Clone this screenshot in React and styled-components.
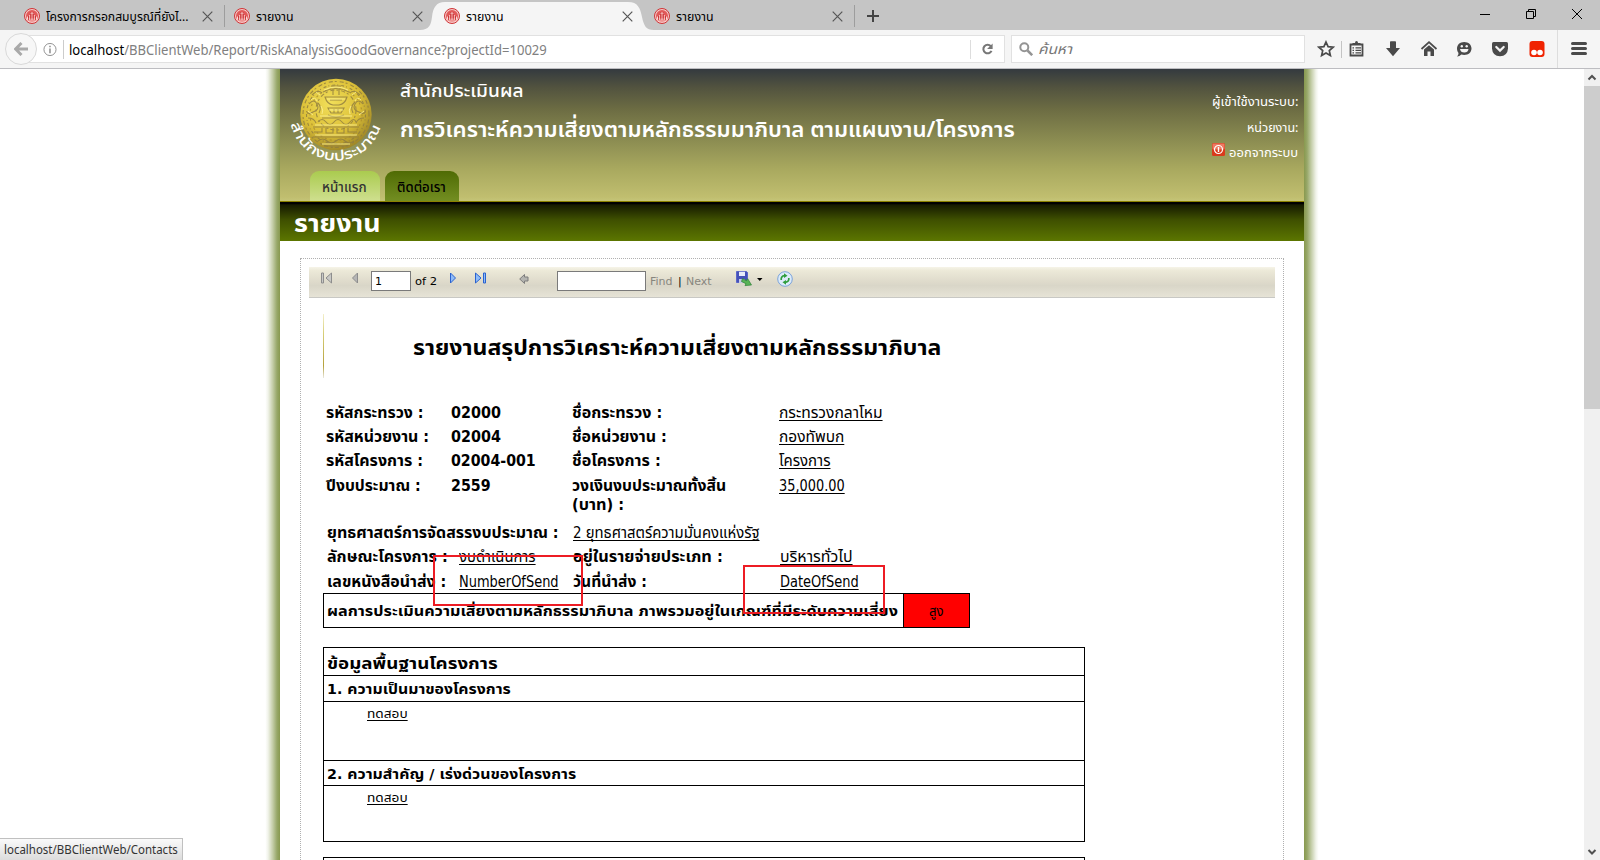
import React, { useLayoutEffect, useRef, useState } from 'react';
import styled, { createGlobalStyle, css } from 'styled-components';

const GlobalStyle = createGlobalStyle`
  * { box-sizing: border-box; }
  body { margin: 0; background: #fff; overflow: hidden; }
`;

const TAHOMA = '"DejaVu Sans Condensed", "DejaVu Sans", "Noto Sans Thai", "Loma", sans-serif';
const VERDANA = '"DejaVu Sans", sans-serif';
const UI = '"Noto Sans", "Open Sans", "Noto Sans Thai", sans-serif';

/* Text set to a fixed measure, whatever the widths of the installed Thai font. */
const Measure = styled.span`
  display: inline-block;
  flex: none;
  width: ${(p) => p.$w}px;
  white-space: nowrap;
  vertical-align: top;
`;
const Stretch = styled.span`
  display: inline-block;
  transform-origin: 0 50%;
  ${(p) => p.$line && css`
    text-decoration: underline;
    text-decoration-thickness: 1px;
    text-decoration-skip-ink: none;
    text-underline-offset: 2px;
  `}
`;
function Fit({ w, line, children, className }) {
  const ref = useRef(null);
  const [k, setK] = useState(1);
  useLayoutEffect(() => {
    const natural = ref.current.offsetWidth;
    if (natural) setK(w / natural);
  }, [w, children]);
  return (
    <Measure $w={w} className={className}>
      <Stretch ref={ref} $line={line} style={{ transform: `scaleX(${k})` }}>{children}</Stretch>
    </Measure>
  );
}

const Screen = styled.div`
  display: flex;
  flex-direction: column;
  position: relative;
  width: 1600px;
  height: 860px;
  overflow: hidden;
  background: #fff;
  color: #000;
`;

/* ---------- browser chrome ---------- */
const TabStrip = styled.div`
  display: flex;
  flex: none;
  height: 30px;
  padding-left: 14px;
  background: #c5c5c5;
  font: 13px/30px ${UI};
`;
const Tab = styled.div`
  display: flex;
  position: relative;
  align-items: center;
  width: 210px;
  height: 32px;
  padding: 0 10px;
  gap: 6px;
`;
const TabShape = styled.svg`
  position: absolute;
  left: -14px;
  top: 2px;
  width: 242px;
  height: 28px;
`;
const TabLabel = styled(Fit)`position: relative; margin-top: -1px;`;
const TabIcon = styled.svg`position: relative; flex: none; width: 16px; height: 16px;`;
const CloseIcon = styled.svg`position: relative; width: 11px; height: 11px; margin-left: auto; margin-right: 1px;`;
const Divider = styled.i`
  flex: none;
  width: 1px;
  height: ${(p) => p.$h}px;
  background: ${(p) => p.$c || '#9d9d9d'};
`;
const TabDivider = styled(Divider)`position: absolute; right: -1px; top: 5px;`;
const NewTab = styled.svg`width: 12px; height: 12px; margin: 10px 0 0 13px;`;
const WindowButtons = styled.div`
  display: flex;
  gap: 34px;
  margin: 8px 17px 0 auto;
  svg { width: 12px; height: 12px; }
`;

const NavBar = styled.div`
  display: flex;
  flex: none;
  align-items: center;
  height: 39px;
  padding-left: 5px;
  background: #f5f5f5;
  border-bottom: 1px solid #bdbdc1;
  font: 15px/26px ${UI};
`;
const BackButton = styled.div`
  display: flex;
  z-index: 1;
  flex: none;
  align-items: center;
  justify-content: center;
  width: 32px;
  height: 32px;
  border: 1px solid #d9d9d9;
  border-radius: 50%;
  background: #f7f7f7;
`;
const Field = styled.div`
  display: flex;
  align-items: center;
  height: 28px;
  border: 1px solid #e1e1e1;
  background: #fff;
`;
const UrlField = styled(Field)`
  width: 978px;
  margin-left: -10px;
  padding-left: 15px;
`;
const InfoIcon = styled.svg`width: 15px; height: 15px; margin: 0 6px 0 0;`;
const UrlText = styled.span`
  display: flex;
  margin-left: 5px;
  color: #808080;
  b { color: #000; font-weight: 400; }
`;
const ReloadIcon = styled.svg`width: 14px; height: 14px; margin: 0 10px;`;
const SearchField = styled(Field)`
  width: 294px;
  margin-left: 6px;
  padding-left: 7px;
  gap: 5px;
  color: #757575;
  font-style: italic;
  font-size: 14px;
`;
const ActionIcons = styled.div`
  display: flex;
  align-items: center;
  height: 38px;
  margin-left: 12px;
  svg { width: 18px; height: 18px; flex: none; }
`;
const Gap = styled.i`flex: none; width: ${(p) => p.$w}px;`;

/* ---------- page ---------- */
const Viewport = styled.div`
  display: flex;
  flex: 1;
  min-height: 0;
`;
const Shade = styled.div`
  flex: none;
  width: 15px;
  margin-left: ${(p) => (p.$side === 'left' ? 265 : 0)}px;
  background: linear-gradient(to ${(p) => p.$side}, #88994f 0%, #97a768 20%, #c6cfab 50%, #f1f3ea 80%, #fff 98%);
`;
const Page = styled.div`
  display: flex;
  flex: none;
  flex-direction: column;
  width: 1024px;
  height: 791px;
  overflow: hidden;
`;
const Header = styled.header`
  display: flex;
  flex: none;
  position: relative;
  height: 133px;
  border-bottom: 1px solid #8b8200;
  background: linear-gradient(#343a3f 0%, #52533f 14%, #6d6d43 31%, #8a8b51 53%, #a9a95f 76%, #c0be6f 97%, #c5c478 100%);
  color: #fff;
`;
const Brand = styled.div`display: flex; flex-direction: column; width: 115px;`;
const Seal = styled.svg`width: 100px; height: 98px; margin-left: 6px; overflow: visible;`;
const HeaderTabs = styled.nav`
  display: flex;
  gap: 5px;
  margin: 4px 0 0 30px;
`;
const HeaderTab = styled.span`
  flex: none;
  height: 30px;
  padding: 0 13px 0 12px;
  border-radius: 9px 9px 0 0;
  color: ${(p) => (p.$active ? '#333' : '#000')};
  background: ${(p) => (p.$active ? 'linear-gradient(#aacb4f, #cfdf8f)' : 'linear-gradient(#4f6b04, #738e22)')};
  font: 500 14px/31px ${UI};
`;
const Titles = styled.div`
  display: flex;
  flex-direction: column;
  padding: 7px 0 0 5px;
  font-family: ${UI};
`;
const Org = styled.div`height: 31px; font-size: 18px; font-weight: 500; line-height: 28px;`;
const System = styled.div`height: 40px; font-size: 22px; font-weight: 600; line-height: 42px;`;
const UserInfo = styled.div`
  display: flex;
  flex-direction: column;
  align-items: flex-end;
  margin-left: auto;
  padding: 20px 6px 0 0;
  font: 13px/25.5px ${UI};
`;
const Logout = styled.div`
  display: flex;
  gap: 4px;
  svg { width: 13px; height: 13px; margin-top: 3px; }
`;
const Banner = styled.div`
  flex: none;
  height: 39px;
  padding-left: 14px;
  background: linear-gradient(#000 0, #000 5%, #151a00 7%, #3e4f00 45%, #5c7600 100%);
  color: #fff;
  font: 700 24px/44px ${TAHOMA};
`;
const Panel = styled.div`
  display: flex;
  flex: none;
  flex-direction: column;
  width: 984px;
  height: 700px;
  margin: 17px 0 0 20px;
  padding: 8px 8px 0;
  border: 1px dotted #b0b0b0;
`;
const ReportBar = styled.div`
  display: flex;
  flex: none;
  align-items: flex-start;
  height: 31px;
  padding: 4px 0 0 12px;
  border-bottom: 1px solid #c8c8c4;
  background: linear-gradient(#f6f4e8 0, #ece9d8 12%, #dedacb 50%, #d9d6c8 62%, #e6e3d6 100%);
  font: 11px/21px ${VERDANA};
  svg { flex: none; }
`;
const BarInput = styled.div`
  flex: none;
  width: ${(p) => p.$w}px;
  height: 20px;
  padding-left: 3px;
  border: 1px solid #7a7a7a;
  background: #fff;
  line-height: 19px;
`;
const Muted = styled.span`color: #87867e;`;

/* ---------- report ---------- */
const Report = styled.div`
  display: flex;
  flex-direction: column;
  padding-left: 14px;
  font: 15px/26px ${TAHOMA};
`;
const ReportHead = styled.div`
  display: flex;
  height: 64px;
  margin-top: 16px;
  padding-left: 89px;
  border-left: 1px solid;
  border-image: linear-gradient(#f5f1d0, #d8cf7a 30%, #b5a13c 80%, #eee) 1;
  font-size: 21px;
  font-weight: 700;
  line-height: 68px;
`;
const Fields = styled.div`
  display: flex;
  flex-direction: column;
  margin-top: 22px;
`;
const FieldRow = styled.div`
  display: grid;
  grid-template-columns: ${(p) => p.$cols};
  height: ${(p) => p.$h}px;
  padding-left: ${(p) => p.$pad || 3}px;
`;
const Strong = styled(Fit)`font-weight: 700;`;
const SecondLine = styled.div`margin-top: -7px; line-height: 26px;`;
const Result = styled.div`
  display: flex;
  width: 647px;
  height: 35px;
  border: 1px solid #000;
  line-height: 35px;
  font-size: 14px;
`;
const ResultText = styled.div`width: 580px; padding-left: 3px; border-right: 1px solid #000;`;
const Level = styled.div`flex: 1; padding-left: 25px; background: #f00;`;
const Table = styled.div`
  width: 762px;
  margin-top: ${(p) => p.$top}px;
  border: 1px solid #000;
  border-bottom: 0;
`;
const Cell = styled.div`
  height: ${(p) => p.$h}px;
  padding-left: ${(p) => (p.$body ? 43 : 3)}px;
  border-bottom: 1px solid #000;
  font-size: ${(p) => (p.$body ? 12 : p.$head ? 16 : 14)}px;
  line-height: ${(p) => (p.$body ? 25 : p.$head ? 32 : 26)}px;
`;

const Highlight = styled.div`
  position: absolute;
  left: ${(p) => p.$x}px;
  top: ${(p) => p.$y}px;
  width: ${(p) => p.$w}px;
  height: ${(p) => p.$h}px;
  border: 2px solid #ed1c24;
`;
const StatusTip = styled.div`
  position: absolute;
  left: -1px;
  bottom: 0;
  width: 184px;
  height: 22px;
  padding-left: 4px;
  border: 1px solid #c0c0c0;
  border-bottom: 0;
  background: linear-gradient(#fafafa, #dcdcdc);
  color: #333;
  font: 12px/21px ${UI};
`;
const Scrollbar = styled.div`
  display: flex;
  flex-direction: column;
  justify-content: space-between;
  width: 16px;
  margin-left: auto;
  background: #f0f0f0;
  svg { width: 16px; height: 17px; }
`;
const Thumb = styled.div`height: 323px; margin-bottom: auto; background: #cdcdcd;`;

const Cross = () => (
  <CloseIcon viewBox="0 0 11 11"><path d="M.7.7l9.6 9.6M10.3.7L.7 10.3" stroke="#555" strokeWidth="1.2" /></CloseIcon>
);
const Favicon = () => (
  <TabIcon viewBox="0 0 16 16">
    <circle cx="8" cy="8" r="7.5" fill="#f7c9c7" stroke="#cf3336" />
    <circle cx="8" cy="8" r="6" fill="#e05a5a" />
    <path d="M3 11h10M3.5 8.5v3M5.7 7v5M8 4v8M10.300 7v5M12.500 8.500v3M6 5.500h4M4 13h8" stroke="#ffe3e0" strokeWidth=".9" fill="none" />
    <path d="M6.800 4.500v7M9.200 4.500v7M4.600 8v4M11.400 8v4" stroke="#c4262b" strokeWidth=".8" />
  </TabIcon>
);
function BrowserTab({ label, w, active, divider }) {
  return (
    <Tab>
      {active && (
        <TabShape viewBox="0 0 242 28">
          <path d="M0 28C9 28 11 23 12 15C13 6 16 0 25 0H208C218 0 220 6 222 15C224 24 226 28 234 28Z" fill="#f5f5f5" />
        </TabShape>
      )}
      <Favicon />
      <TabLabel w={w}>{label}</TabLabel>
      <Cross />
      {divider && <TabDivider $h={22} />}
    </Tab>
  );
}

function SealArt() {
  return (
    <Seal viewBox="286 69 100 98">
      <defs>
        <radialGradient id="gold" cx="42%" cy="35%" r="68%">
          <stop offset="0" stopColor="#f2df5a" />
          <stop offset=".6" stopColor="#dcc038" />
          <stop offset="1" stopColor="#9c8426" />
        </radialGradient>
        <path id="rim" d="M291 124 A46 46 0 0 0 381 124" />
      </defs>
      <circle cx="336" cy="114.500" r="35.700" fill="url(#gold)" />
      <g fill="none" stroke="#8f7c40" strokeWidth="1.100" opacity=".8">
        <circle cx="336" cy="114.500" r="33" strokeDasharray="2 3 4 2" />
        <circle cx="336" cy="114.500" r="29.500" strokeDasharray="3 2 1 3" />
        <circle cx="336" cy="114.500" r="26" strokeDasharray="2 3" stroke="#a98b2c" />
        <circle cx="336" cy="110" r="20" strokeDasharray="4 2 2 3" />
        <path d="M323 92q13-7 26 0M325 97h22q-2 7-8 8h-6q-6-1-8-8zM328 108h16l-3 5h-10zM322 118h28M318 122q4-5 8 0t8 0 8 0 8 0 6 0M313 127h46M314 132h8v-4M326 128v5h7v-5M337 128v5h7v-5M348 128v4h9M313 137h46M318 141q5-4 9 0t9 0 9 0 9 0M324 146h24" />
        <path d="M309 104q5-6 8 0t-4 8q-5 3-6 0M363 104q-5-6-8 0t4 8q5 3 6 0M312 95q6-6 10-2M360 95q-6-6-10-2M308 118q6 0 8 5M364 118q-6 0-8 5M318 103q4 4 1 10M354 103q-4 4-1 10" />
        <path d="M331 86h10M333 89v6M339 89v6M330 100h12M334 109v4M338 109v4M328 115q8 4 16 0" />
      </g>
      <g fill="none" stroke="#fbee8e" strokeWidth=".9">
        <path d="M324 90q12-6 24 0M327 99h18M329 110h14M320 116h32M315 125h42M315 135h42M322 144h28M311 100q4-4 6 1M361 100q-4-4-6 1M308 111l5 4M364 111l-5 4M316 92l4 3M356 92l-4 3M321 106q3 4 1 8M351 106q-3 4-1 8" />
      </g>
      <text fill="#fff" fontFamily='"Noto Sans Thai", "Loma", sans-serif' fontSize="14" fontWeight="500">
        <textPath href="#rim" textLength="122" lengthAdjust="spacingAndGlyphs">สำนักงบประมาณ</textPath>
      </text>
    </Seal>
  );
}

const ink = '#4a4a4a';

export default function App() {
  return (
    <Screen>
      <GlobalStyle />
      <TabStrip>
        <BrowserTab label="โครงการกรอกสมบูรณ์ที่ยังไ..." w={142} divider />
        <BrowserTab label="รายงาน" w={38} />
        <BrowserTab label="รายงาน" w={38} active />
        <BrowserTab label="รายงาน" w={38} divider />
        <NewTab viewBox="0 0 12 12"><path d="M6 0v12M0 6h12" stroke="#444" strokeWidth="2" /></NewTab>
        <WindowButtons>
          <svg viewBox="0 0 12 12"><path d="M1 6.500h10" stroke="#000" /></svg>
          <svg viewBox="0 0 12 12"><path d="M1.500 3.500h7v7h-7zM3.500 3V1.500h7v7H9" fill="none" stroke="#000" /></svg>
          <svg viewBox="0 0 12 12"><path d="M1 1l10 10M11 1L1 11" stroke="#000" /></svg>
        </WindowButtons>
      </TabStrip>

      <NavBar>
        <BackButton>
          <svg width="14" height="14" viewBox="0 0 14 14"><path d="M7.500 1L1.500 7l6 6M2 7h12" fill="none" stroke="#a9a9a9" strokeWidth="3" /></svg>
        </BackButton>
        <UrlField>
          <InfoIcon viewBox="0 0 15 15"><circle cx="7.500" cy="7.500" r="6.500" fill="none" stroke="#8c8c8c" /><path d="M7.500 3.500v1.500M7.500 6.500v5" stroke="#8c8c8c" strokeWidth="1.600" /></InfoIcon>
          <Divider $h={19} $c="#ccc" />
          <UrlText><Fit w={478}><b>localhost</b>/BBClientWeb/Report/RiskAnalysisGoodGovernance?projectId=10029</Fit></UrlText>
          <Gap $w={423} />
          <Divider $h={19} $c="#ddd" />
          <ReloadIcon viewBox="0 0 14 14"><path d="M10.600 4A4.600 4.600 0 1 0 11.300 9" fill="none" stroke="#777" strokeWidth="2.200" /><path d="M12.500 1v6h-6z" fill="#777" /></ReloadIcon>
        </UrlField>
        <SearchField>
          <svg width="14" height="14" viewBox="0 0 14 14"><circle cx="5.300" cy="5.300" r="4" fill="none" stroke="#949494" strokeWidth="2" /><path d="M8.500 8.500l4.700 4.700" stroke="#949494" strokeWidth="2.500" /></svg>
          <Fit w={34}>ค้นหา</Fit>
        </SearchField>
        <ActionIcons>
          <svg viewBox="0 0 18 18"><path d="M9 2l2.100 4.700 5 .5-3.800 3.400 1.100 5L9 13l-4.400 2.600 1.100-5L1.900 7.200l5-.5z" fill="none" stroke={ink} strokeWidth="1.700" /></svg>
          <Gap $w={6} /><Divider $h={17} $c="#c4c4c4" /><Gap $w={6} />
          <svg viewBox="0 0 18 18"><path d="M2.500 4.500h12v11h-12z" fill="none" stroke={ink} strokeWidth="1.800" /><path d="M4.500 5V3H7q0-2 1.500-2T10 3h2.500v2z" fill={ink} /><path d="M4.500 7.800H6M7.500 7.800h5.500M4.500 10.300H6M7.500 10.300h5.500M4.500 12.800H6M7.500 12.800h5.500" stroke={ink} strokeWidth="1.200" /></svg>
          <Gap $w={18} />
          <svg viewBox="0 0 18 18"><path d="M6 2q0-.8.8-.8h4.400q.8 0 .8.800v6h4L9 16.200 2 8h4z" fill={ink} /></svg>
          <Gap $w={18} />
          <svg viewBox="0 0 18 18"><path d="M1.500 9L9 2.200 16.500 9" fill="none" stroke={ink} strokeWidth="1.800" /><path d="M4 9.500l5-4.300 5 4.300V16h-3.500v-4.500h-3V16H4z" fill={ink} /></svg>
          <Gap $w={17} />
          <svg viewBox="0 0 18 18"><path d="M9.200 2C13.500 2 16.500 4.800 16.500 8.500S13.500 15 9.200 15c-1 0-2-.2-2.800-.5Q4.500 16.500 2 16.500q1.600-1.500 1.500-3.500C2.500 11.800 2 10.300 2 8.500 2 4.800 5 2 9.200 2z" fill={ink} /><path d="M5 9h8.500q-.5 3.500-4.200 3.500T5 9z" fill="#f5f5f5" /><circle cx="6.800" cy="6.200" r="1.200" fill="#f5f5f5" /><circle cx="11.700" cy="6.200" r="1.200" fill="#f5f5f5" /></svg>
          <Gap $w={18} />
          <svg viewBox="0 0 18 18"><path d="M1 3.500Q1 2 2.500 2h13Q17 2 17 3.500v5Q16.500 16 9 16.300 1.500 16 1 8.500z" fill={ink} /><path d="M5.300 7L9 10.600 12.700 7" fill="none" stroke="#f5f5f5" strokeWidth="2.200" strokeLinecap="round" /></svg>
          <Gap $w={19} />
          <svg viewBox="0 0 18 18"><rect x="1.500" y="1" width="15" height="16" rx="3" fill="#f02300" /><circle cx="6" cy="12.500" r="2.800" fill="#fff" /><circle cx="12" cy="12.500" r="2.800" fill="#fff" /></svg>
          <Gap $w={11} /><Divider $h={38} $c="#ddd" /><Gap $w={12} />
          <svg viewBox="0 0 18 18"><path d="M2.500 3.500h13M2.500 8.500h13M2.500 13.500h13" stroke={ink} strokeWidth="3" strokeLinecap="round" /></svg>
        </ActionIcons>
      </NavBar>

      <Viewport>
        <Shade $side="left" />
        <Page>
          <Header>
            <Brand>
              <SealArt />
              <HeaderTabs>
                <HeaderTab $active><Fit w={45}>หน้าแรก</Fit></HeaderTab>
                <HeaderTab><Fit w={49}>ติดต่อเรา</Fit></HeaderTab>
              </HeaderTabs>
            </Brand>
            <Titles>
              <Org><Fit w={124}>สำนักประเมินผล</Fit></Org>
              <System><Fit w={615}>การวิเคราะห์ความเสี่ยงตามหลักธรรมมาภิบาล ตามแผนงาน/โครงการ</Fit></System>
            </Titles>
            <UserInfo>
              <Fit w={86}>ผู้เข้าใช้งานระบบ:</Fit>
              <Fit w={51}>หน่วยงาน:</Fit>
              <Logout>
                <svg viewBox="0 0 13 13"><rect width="13" height="13" rx="1.500" fill="#d93a1c" /><rect x=".5" y=".5" width="12" height="6" rx="1" fill="#ec7a62" /><circle cx="6.500" cy="6.500" r="4" fill="none" stroke="#fff" strokeWidth="1.200" /><path d="M6.500 4v5" stroke="#fff" strokeWidth="1.400" /></svg>
                <Fit w={69}>ออกจากระบบ</Fit>
              </Logout>
            </UserInfo>
          </Header>
          <Banner><Fit w={86}>รายงาน</Fit></Banner>

          <Panel>
            <ReportBar>
              <svg width="12" height="14" viewBox="0 0 12 14"><path d="M.5 2h2v10h-2zM10.500 2v10L5 7z" fill="#c9c9c6" stroke="#8d8d8d" /></svg>
              <Gap $w={19} />
              <svg width="6" height="14" viewBox="0 0 6 14"><path d="M5.500 2v10L.5 7z" fill="#b5b5b5" stroke="#8d8d8d" /></svg>
              <Gap $w={13} />
              <BarInput $w={40}>1</BarInput>
              <Gap $w={4} /><Fit w={22}>of 2</Fit><Gap $w={13} />
              <svg width="6" height="14" viewBox="0 0 6 14"><path d="M.5 2v10l5-5z" fill="#8fbcf8" stroke="#2a62cf" /></svg>
              <Gap $w={19} />
              <svg width="12" height="14" viewBox="0 0 12 14"><path d="M.5 2v10L6 7zM8.500 2h2v10h-2z" fill="#8fbcf8" stroke="#2a62cf" /></svg>
              <Gap $w={32} />
              <svg width="10" height="15" viewBox="0 0 10 15"><path d="M.7 8L5.500 3.500V6H9v4H5.500v2.500z" fill="#b4b4b0" stroke="#7d7d7d" /></svg>
              <Gap $w={28} />
              <BarInput $w={89} />
              <Gap $w={4} /><Muted><Fit w={23}>Find</Fit></Muted>
              <Gap $w={5} /><Fit w={4}>|</Fit><Gap $w={4} />
              <Muted><Fit w={26}>Next</Fit></Muted>
              <Gap $w={24} />
              <svg width="17" height="16" viewBox="0 0 17 16"><path d="M.5.500h10l1 1v10H.5z" fill="#4551b8" stroke="#5a66c8" /><path d="M3 .8h6V5H3z" fill="#e8ecfa" /><path d="M3 8h6v4H3z" fill="#c5c9e8" /><path d="M6.500 7.500l4 2.200 1.200-2 3.800 6.300-6.500.6 1-1.900-4.500-2.200z" fill="#58b356" stroke="#2c8136" strokeWidth=".7" /></svg>
              <Gap $w={4} />
              <svg width="6" height="16" viewBox="0 0 6 16"><path d="M0 7h5.500L2.800 10z" fill="#000" /></svg>
              <Gap $w={14} />
              <svg width="16" height="16" viewBox="0 0 16 16"><circle cx="8" cy="8" r="7.300" fill="#dcebfa" stroke="#7ba3da" /><path d="M4.200 9q-.4-4 3.300-4.300" fill="none" stroke="#2f9e3d" strokeWidth="1.700" /><path d="M7 2.300L10.500 4.700 7 7z" fill="#2f9e3d" /><path d="M11.800 7q.4 4-3.300 4.300" fill="none" stroke="#2f9e3d" strokeWidth="1.700" /><path d="M9 13.700L5.500 11.300 9 9z" fill="#2f9e3d" /></svg>
            </ReportBar>

            <Report>
              <ReportHead><Fit w={528}>รายงานสรุปการวิเคราะห์ความเสี่ยงตามหลักธรรมาภิบาล</Fit></ReportHead>
              <Fields>
                <FieldRow $h={24} $cols="125px 121px 207px 1fr">
                  <Strong w={97}>รหัสกระทรวง :</Strong><Strong w={50}>02000</Strong>
                  <Strong w={90}>ชื่อกระทรวง :</Strong><Fit line w={104}>กระทรวงกลาโหม</Fit>
                </FieldRow>
                <FieldRow $h={24} $cols="125px 121px 207px 1fr">
                  <Strong w={103}>รหัสหน่วยงาน :</Strong><Strong w={50}>02004</Strong>
                  <Strong w={95}>ชื่อหน่วยงาน :</Strong><Fit line w={65}>กองทัพบก</Fit>
                </FieldRow>
                <FieldRow $h={25} $cols="125px 121px 207px 1fr">
                  <Strong w={97}>รหัสโครงการ :</Strong><Strong w={85}>02004-001</Strong>
                  <Strong w={89}>ชื่อโครงการ :</Strong><Fit line w={51}>โครงการ</Fit>
                </FieldRow>
                <FieldRow $h={47} $cols="125px 121px 207px 1fr">
                  <Strong w={95}>ปีงบประมาณ :</Strong><Strong w={40}>2559</Strong>
                  <div>
                    <Strong w={154}>วงเงินงบประมาณทั้งสิ้น</Strong>
                    <SecondLine><Strong w={52}>(บาท) :</Strong></SecondLine>
                  </div>
                  <Fit line w={66}>35,000.00</Fit>
                </FieldRow>
                <FieldRow $h={24} $pad={4} $cols="246px 1fr">
                  <Strong w={232}>ยุทธศาสตร์การจัดสรรงบประมาณ :</Strong><Fit line w={187}>2 ยุทธศาสตร์ความมั่นคงแห่งรัฐ</Fit>
                </FieldRow>
                <FieldRow $h={25} $pad={4} $cols="132px 114px 207px 1fr">
                  <Strong w={121}>ลักษณะโครงการ :</Strong><Fit line w={77}>งบดำเนินการ</Fit>
                  <Strong w={150}>อยู่ในรายจ่ายประเภท :</Strong><Fit line w={73}>บริหารทั่วไป</Fit>
                </FieldRow>
                <FieldRow $h={24} $pad={4} $cols="132px 114px 207px 1fr">
                  <Strong w={119}>เลขหนังสือนำส่ง :</Strong><Fit line w={100}>NumberOfSend</Fit>
                  <Strong w={74}>วันที่นำส่ง :</Strong><Fit line w={79}>DateOfSend</Fit>
                </FieldRow>
              </Fields>
              <Result>
                <ResultText><Strong w={571}>ผลการประเมินความเสี่ยงตามหลักธรรมาภิบาล ภาพรวมอยู่ในเกณฑ์ที่มีระดับความเสี่ยง</Strong></ResultText>
                <Level><Fit w={15}>สูง</Fit></Level>
              </Result>
              <Table $top={19}>
                <Cell $h={28} $head><Strong w={171}>ข้อมูลพื้นฐานโครงการ</Strong></Cell>
                <Cell $h={26}><Strong w={184}>1. ความเป็นมาของโครงการ</Strong></Cell>
                <Cell $h={59} $body><Fit line w={41}>ทดสอบ</Fit></Cell>
                <Cell $h={25}><Strong w={249}>2. ความสำคัญ / เร่งด่วนของโครงการ</Strong></Cell>
                <Cell $h={56} $body><Fit line w={41}>ทดสอบ</Fit></Cell>
              </Table>
              <Table $top={15}><Cell $h={28} $head /></Table>
            </Report>
          </Panel>
        </Page>
        <Shade $side="right" />
        <Scrollbar>
          <svg viewBox="0 0 16 17"><path d="M4.500 10.500L8 7l3.500 3.500" fill="none" stroke="#505050" strokeWidth="2" /></svg>
          <Thumb />
          <svg viewBox="0 0 16 17"><path d="M4.500 7L8 10.500 11.500 7" fill="none" stroke="#505050" strokeWidth="2" /></svg>
        </Scrollbar>
      </Viewport>

      <Highlight $x={433} $y={555} $w={150} $h={51} />
      <Highlight $x={743} $y={565} $w={142} $h={49} />
      <StatusTip><Fit w={174}>localhost/BBClientWeb/Contacts</Fit></StatusTip>
    </Screen>
  );
}
